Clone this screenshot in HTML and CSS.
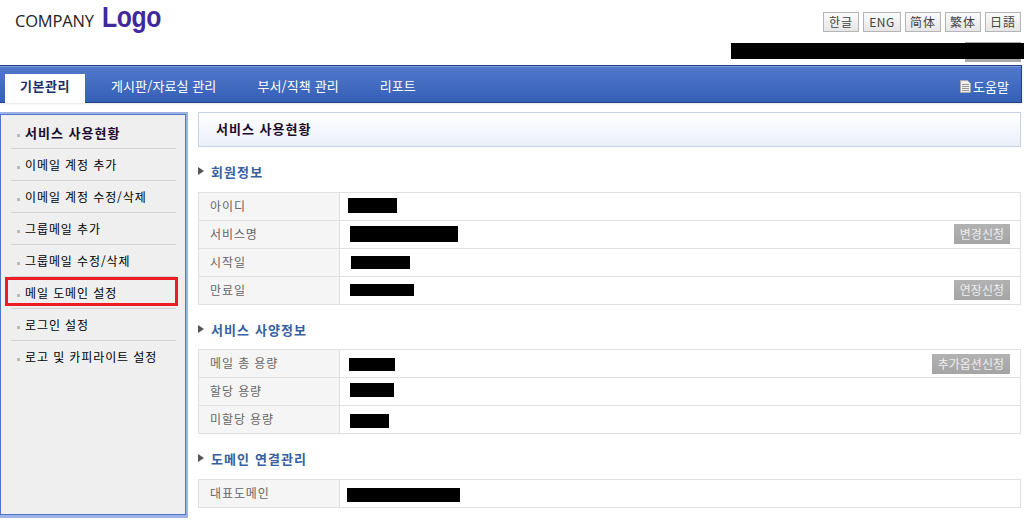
FILE: index.html
```html
<!DOCTYPE html>
<html lang="ko">
<head>
    <meta charset="UTF-8">
    <title>기본관리</title>
    <link rel="stylesheet" href="styles.css">
</head>
<body>

<div class="header">
    <div class="logo"><span class="logo-company">COMPANY</span><span class="logo-word">Logo</span></div>
    <div class="langs">
        <a class="lang">한글</a>
        <a class="lang wide">ENG</a>
        <a class="lang">简体</a>
        <a class="lang">繁体</a>
        <a class="lang">日語</a>
    </div>
</div>
<div class="user-row">
    <div class="user-grey"><div class="black user-black"></div></div>
</div>

<div class="nav">
    <a class="tab active">기본관리</a>
    <a class="tab">게시판/자료실 관리</a>
    <a class="tab">부서/직책 관리</a>
    <a class="tab">리포트</a>
    <a class="help">
        <svg width="11" height="13" viewBox="0 0 11 13"><path d="M.5.5h7l3 3v9H.5z" fill="#eee" stroke="#aaa"/><path d="M2 4.500h7M2 6.500h7M2 8.500h7M2 10.500h7" stroke="#999"/></svg>도움말
    </a>
</div>

<div class="main">
    <div class="side">
        <div class="side-inner">
            <ul class="side-list">
                <li class="side-item current">서비스 사용현황</li>
                <li class="side-item">이메일 계정 추가</li>
                <li class="side-item">이메일 계정 수정/삭제</li>
                <li class="side-item">그룹메일 추가</li>
                <li class="side-item">그룹메일 수정/삭제</li>
                <li class="side-item marked">메일 도메인 설정</li>
                <li class="side-item">로그인 설정</li>
                <li class="side-item last">로고 및 카피라이트 설정</li>
            </ul>
        </div>
    </div>

    <div class="content">
        <div class="page-title">서비스 사용현황</div>

        <h3 class="section">회원정보</h3>
        <table class="info">
            <tr><th>아이디</th><td><div class="black" style="width:49px;height:15px;margin:0 0 2px 8px"></div></td></tr>
            <tr><th>서비스명</th><td><div class="black" style="width:108px;height:16px;margin:0 0 2px 10px"></div><a class="btn">변경신청</a></td></tr>
            <tr><th>시작일</th><td><div class="black" style="width:59px;height:13px;margin:0 0 0 11px"></div></td></tr>
            <tr><th>만료일</th><td><div class="black" style="width:64px;height:12px;margin:0 0 2px 10px"></div><a class="btn">연장신청</a></td></tr>
        </table>

        <h3 class="section">서비스 사양정보</h3>
        <table class="info tight">
            <tr><th>메일 총 용량</th><td><div class="black" style="width:46px;height:13px;margin:2px 0 0 9px"></div><a class="btn btn-low">추가옵션신청</a></td></tr>
            <tr><th>할당 용량</th><td><div class="black" style="width:44px;height:14px;margin:0 0 4px 10px"></div></td></tr>
            <tr><th>미할당 용량</th><td><div class="black" style="width:39px;height:14px;margin:2px 0 0 10px"></div></td></tr>
        </table>

        <h3 class="section">도메인 연결관리</h3>
        <table class="info">
            <tr><th>대표도메인</th><td><div class="black" style="width:113px;height:14px;margin:2px 0 0 7px"></div></td></tr>
        </table>
    </div>
</div>

</body>
</html>
```

FILE: styles.css
```css
body {
    margin: 0;
    padding: 0;
    width: 1031px;
    height: 525px;
    overflow: hidden;
    background-color: #fff;
    font-family: "Noto Sans CJK KR", "Liberation Sans", sans-serif;
    font-size: 12px;
    color: #000;
}
.black {
    background-color: #000;
}

/* header */
.header {
    display: flex;
    justify-content: space-between;
    height: 42px;
    padding: 0 10px 0 15px;
    box-sizing: border-box;
}
.logo {
    display: flex;
    align-items: baseline;
    height: 34px;
    font-family: "Open Sans", sans-serif;
}
.logo-company {
    font-size: 16.500px;
    line-height: 30px;
    letter-spacing: -0.2px;
    color: #222;
    margin-right: 8px;
}
.logo-word {
    font-family: "Liberation Sans", sans-serif;
    font-size: 29.500px;
    line-height: 34px;
    font-weight: 700;
    letter-spacing: -0.5px;
    color: #41289c;
    transform: scaleX(0.84);
    transform-origin: left;
}
.langs {
    display: flex;
    gap: 4px;
    padding-top: 12px;
}
.lang {
    width: 36px;
    height: 20px;
    box-sizing: border-box;
    border: 1px solid #b5b5b5;
    background-image: linear-gradient(to bottom, #fbfbfb, #e6e6e6);
    text-align: center;
    line-height: 17px;
    font-size: 12px;
    letter-spacing: 1px;
    color: #444;
}
.lang.wide {
    width: 38px;
    letter-spacing: 0.5px;
}
.user-row {
    display: flex;
    justify-content: flex-end;
    height: 23px;
    padding-right: 10px;
}
.user-grey {
    position: relative;
    width: 56px;
    height: 20px;
    background-color: #a8a8a8;
}
.user-black {
    position: absolute;
    top: 1px;
    right: -3px;
    width: 293px;
    height: 16px;
}

/* nav */
.nav {
    display: flex;
    align-items: flex-end;
    width: 1022px;
    height: 38px;
    padding-left: 5px;
    box-sizing: border-box;
    border: 1px solid #1f3f85;
    border-left: 0;
    background-image: linear-gradient(to bottom, #5a7fcf 0, #4f76c9 10%, #3560b6 100%);
    box-shadow: inset 0 1px 0 #7f9bdb, 0 1px 2px rgba(0, 0, 0, 0.1);
}
.tab {
    height: 28px;
    line-height: 24px;
    padding: 0 20px 0 21px;
    font-size: 13px;
    letter-spacing: 0.1px;
    color: #fff;
}
.tab.active {
    width: 80px;
    height: 29px;
    margin-bottom: -1px;
    padding: 0;
    margin-right: 5px;
    box-sizing: border-box;
    text-align: center;
    background-color: #fff;
    color: #1c2e66;
    font-weight: 700;
    letter-spacing: 0.5px;
}
.help {
    display: flex;
    align-items: center;
    gap: 2px;
    height: 28px;
    margin-left: auto;
    margin-right: 12px;
    padding-bottom: 4px;
    box-sizing: border-box;
    font-size: 13px;
    color: #fff;
}

/* side menu */
.main {
    display: flex;
    padding-top: 9px;
}
.side {
    width: 188px;
    height: 406px;
    box-sizing: border-box;
    padding: 2px 2px 3px 0;
    background-color: #9db3e8;
}
.side-inner {
    height: 100%;
    box-sizing: border-box;
    border: 1px solid #5474c8;
    background-color: #efefef;
    padding: 2px 9px 0 10px;
}
.side-list {
    list-style: none;
    margin: 0;
    padding: 0;
}
.side-item {
    position: relative;
    height: 31px;
    line-height: 31px;
    padding-left: 14px;
    border-bottom: 1px solid #d2d2d2;
    font-size: 12px;
    letter-spacing: 0.9px;
}
.side-item::before {
    content: "";
    position: absolute;
    left: 6px;
    top: 17px;
    width: 3px;
    height: 3px;
    background-color: #bbb;
}
.side-item.current {
    font-size: 13px;
    font-weight: 700;
    letter-spacing: 1px;
    color: #1d0a2e;
}
.side-item.last {
    border-bottom: 0;
}
.side-item.marked::after {
    content: "";
    position: absolute;
    left: -6px;
    right: -2px;
    top: 0;
    bottom: 2px;
    border: 3px solid #ed1c24;
}

/* content */
.content {
    width: 823px;
    margin-left: 10px;
}
.page-title {
    height: 35px;
    box-sizing: border-box;
    border: 1px solid #c5d2e8;
    background-image: linear-gradient(to bottom, #fff, #eaeff9);
    padding-left: 17px;
    line-height: 31px;
    font-size: 13px;
    font-weight: 700;
    letter-spacing: 1px;
    color: #1d0a2e;
}
.section {
    position: relative;
    margin: 0;
    height: 18px;
    padding-left: 13px;
    line-height: 18px;
    font-size: 13px;
    font-weight: 700;
    letter-spacing: 1.100px;
    color: #36609f;
}
.section::before {
    content: "";
    position: absolute;
    left: 0;
    top: 4px;
    border-left: 6px solid #555;
    border-top: 4px solid transparent;
    border-bottom: 4px solid transparent;
}
.page-title + .section {
    margin-top: 16px;
}
.info {
    width: 100%;
    margin: 11px 0 16px;
    border-collapse: collapse;
    border: 1px solid #e0e0e0;
}
.info.tight {
    margin-top: 10px;
}
.info th {
    width: 141px;
    height: 28px;
    padding: 0 0 2px 11px;
    box-sizing: border-box;
    border: 1px solid #e0e0e0;
    background-color: #f5f5f5;
    text-align: left;
    font-weight: 400;
    font-size: 12px;
    letter-spacing: 0.9px;
    color: #666;
}
.info td {
    position: relative;
    padding: 0;
    border: 1px solid #e0e0e0;
}
.btn {
    position: absolute;
    right: 10px;
    top: 3px;
    height: 20px;
    padding: 0 6px;
    background-image: linear-gradient(to bottom, #b2b2b2, #a4a4a4);
    line-height: 19px;
    font-size: 12px;
    color: #eee;
}
.btn-low {
    top: 4px;
}
```
